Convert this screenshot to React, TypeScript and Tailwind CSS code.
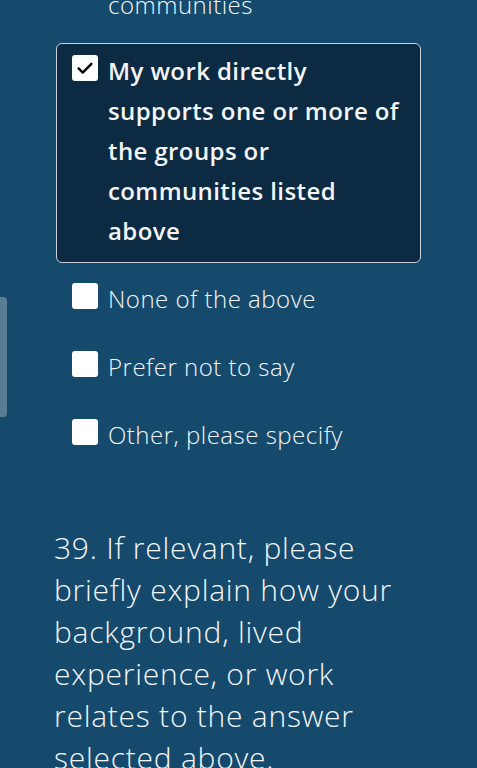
const OPTIONS = ["None of the above", "Prefer not to say", "Other, please specify"];

function CheckBox({ checked }: { checked?: boolean }) {
  return (
    <div className="mt-[4px] flex h-[26px] w-[26px] shrink-0 items-center justify-center rounded-[3px] bg-white">
      {checked && (
        <svg viewBox="0 0 24 24" className="h-[22px] w-[22px]" fill="none" stroke="#000" strokeWidth={2.6} strokeLinecap="round" strokeLinejoin="round">
          <path d="M5 12.5l4.5 4.5L19 7.5" />
        </svg>
      )}
    </div>
  );
}

export default function App() {
  return (
    <div
      className="relative h-screen overflow-hidden bg-[#154a6d] text-[#f3f5f7]"
      style={{ fontFamily: '"Open Sans", "Noto Sans", sans-serif' }}
    >
      {/* side tab */}
      <div className="absolute left-0 top-[297px] h-[120px] w-[7px] rounded-r-[4px] bg-[#5b7d94]" />

      <div className="px-[56px]">
        <div className="-mt-[15px] pl-[52px] text-[24px] font-light leading-[40px] tracking-[0.5px]">communities</div>

        <div className="mt-[18px] flex gap-[10px] rounded-[6px] border-[1.5px] border-[#c9d2da] bg-[#0c2a41] pb-[11px] pl-[15px] pr-[10px] pt-[7px]">
          <CheckBox checked />
          <div className="w-[300px] text-[24px] font-semibold leading-[40px] tracking-[0.4px]">
            My work directly supports one or more of the groups or communities listed above
          </div>
        </div>

        <div className="mt-[16px] flex flex-col gap-[28px] pl-[16px]">
          {OPTIONS.map((o) => (
            <div key={o} className="flex gap-[10px]">
              <CheckBox />
              <div className="text-[24px] font-light leading-[40px] tracking-[0.5px]">{o}</div>
            </div>
          ))}
        </div>

        <div className="mt-[72px] -ml-[2px] pr-[20px] text-[30px] font-light leading-[42px] tracking-[0.75px]">
          39. If relevant, please briefly explain how your background, lived experience, or work relates to the answer selected above.
        </div>
      </div>
    </div>
  );
}
